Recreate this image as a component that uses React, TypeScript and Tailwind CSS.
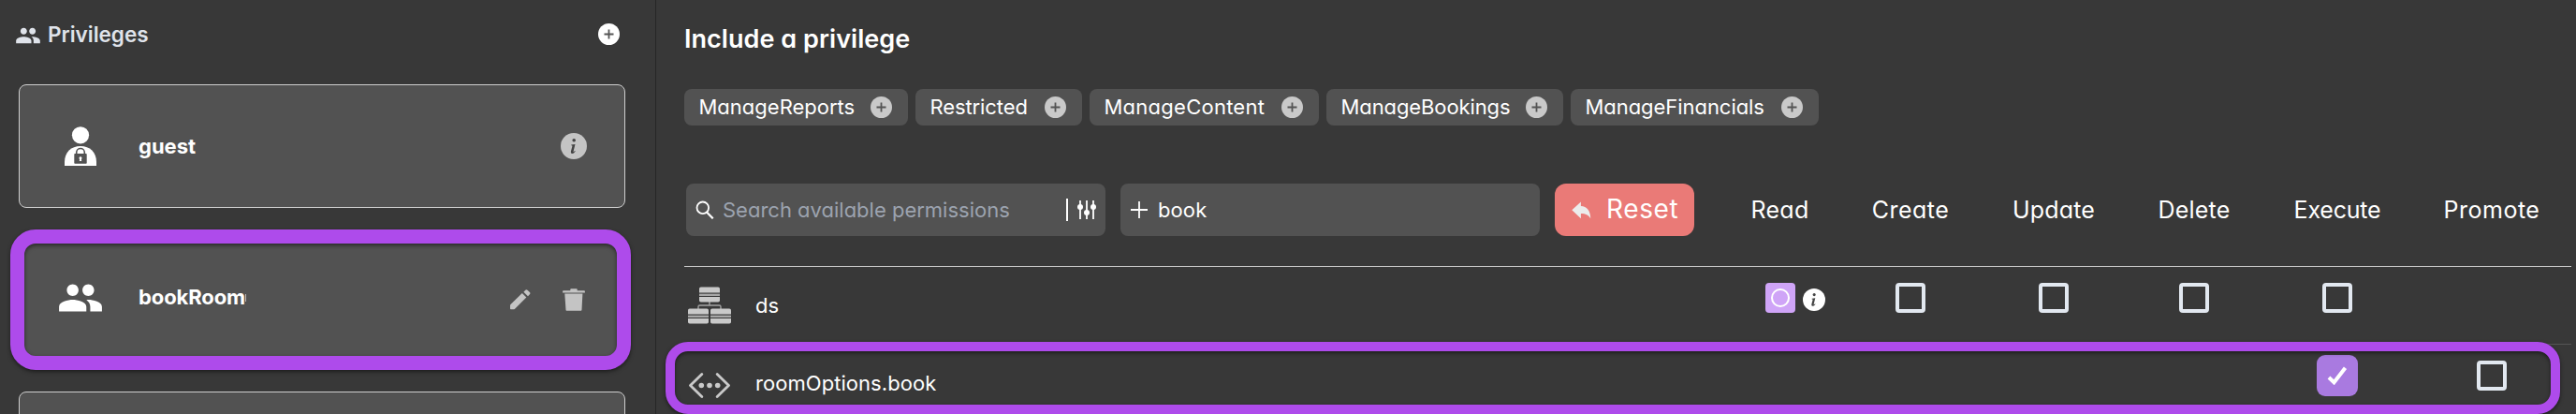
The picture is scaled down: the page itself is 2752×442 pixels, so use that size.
import type { ReactNode } from 'react';
import { MdPeople } from 'react-icons/md';

const chips = [
  { label: 'ManageReports', width: 'w-[239px]', tracking: 'tracking-[0px]' },
  { label: 'Restricted', width: 'w-[178px]', tracking: 'tracking-[-0.1px]' },
  { label: 'ManageContent', width: 'w-[245px]', tracking: 'tracking-[0.25px]' },
  { label: 'ManageBookings', width: 'w-[253px]', tracking: 'tracking-[-0.1px]' },
  { label: 'ManageFinancials', width: 'w-[265px]', tracking: 'tracking-[-0.05px]' },
];

const columns = [
  { label: 'Read', tracking: 'tracking-[0.3px]' },
  { label: 'Create', tracking: 'tracking-[0.5px]' },
  { label: 'Update', tracking: 'tracking-[0.2px]' },
  { label: 'Delete', tracking: 'tracking-[0.2px]' },
  { label: 'Execute', tracking: 'tracking-[-0.2px]' },
  { label: 'Promote', tracking: 'tracking-[0.5px]' },
];

const grid = 'grid grid-cols-[1102px_137px_142px_164px_136px_170px_160px] w-[2016px]';

function PlusCircle({ className }: { className: string }) {
  return (
    <svg viewBox="0 0 23 23" className={`size-[23px] shrink-0 ${className}`}>
      <circle cx="11.5" cy="11.5" r="11.5" fill="currentColor" />
      <path d="M11.5 6.5v10M6.5 11.5h10" stroke="#555" strokeWidth="1.8" />
    </svg>
  );
}

function InfoCircle({ className }: { className: string }) {
  return (
    <svg viewBox="0 0 28 28" className={`shrink-0 ${className}`}>
      <circle cx="14" cy="14" r="14" fill="currentColor" />
      <circle cx="14.2" cy="7.7" r="1.8" fill="#444" />
      <path
        d="M11.3 12.6c1.4-.2 2.6-.5 4.2-.6l-1.9 7.4c-.2.8.3.9 1.6-.4l.5.4c-1.2 1.7-2.3 2.5-3.4 2.5-1.3 0-1.7-1-1.3-2.6l1.3-4.9c.2-.8 0-1.2-1.1-1.1z"
        fill="#444"
      />
    </svg>
  );
}

function GuestIcon() {
  return (
    <svg viewBox="0 0 34 42" className="h-[42px] w-[34px]">
      <circle cx="17" cy="9.3" r="9.1" fill="#fff" />
      <path d="M0 42v-4C0 27.5 7 21 17 21s17 6.5 17 17v4z" fill="#fff" />
      <path d="M12.7 30v-2.2a4.3 4.3 0 0 1 8.6 0V30" fill="none" stroke="#525252" strokeWidth="1.6" />
      <rect x="10.3" y="29" width="13.4" height="10.8" rx=".8" fill="#525252" />
      <path d="M17 32.2a1.5 1.5 0 0 1 .9 2.7l.3 2.1h-2.4l.3-2.1a1.5 1.5 0 0 1 .9-2.7z" fill="#fff" />
    </svg>
  );
}

function PencilIcon() {
  return (
    <svg viewBox="0 0 22 22" className="size-[22px]" fill="#c4c4c4">
      <path d="M0 17.2c0-.5.2-.8.5-1.2L12.8 3.9l4.5 4.5L5.3 20.6c-.4.4-.7.6-1.2.6H1c-.6 0-1-.4-1-1z" />
      <path d="M14.4 2.7 16.3.8c.7-.7 1.500-.7 2.200 0l2.400 2.300c.7.7.7 1.500 0 2.200l-1.900 1.900z" />
    </svg>
  );
}

function TrashIcon() {
  return (
    <svg viewBox="0 0 24 24" className="size-6" fill="#c4c4c4">
      <path d="M8.3 2.2V1c0-.6.3-.8.8-.8h5.8c.5 0 .8.2.8.8v1.200H23c.6 0 .9.3.9.8v1.400H.1V3c0-.5.3-.8.9-.8z" />
      <path d="M2.3 5.600h19.100L20.500 22.700c0 .7-.5 1.100-1.200 1.100H4.700c-.7 0-1.200-.4-1.200-1.100z" />
    </svg>
  );
}

function SearchIcon() {
  return (
    <svg viewBox="0 0 20 20" className="size-5 shrink-0" fill="none" stroke="#fff" strokeWidth="1.8">
      <circle cx="7.8" cy="7.8" r="6.3" />
      <path d="M12 12.5 18.7 19.3" strokeWidth="2.2" />
    </svg>
  );
}

function SlidersIcon() {
  return (
    <svg viewBox="0 0 20 20" className="size-5 shrink-0" fill="#fff" stroke="#fff">
      <path d="M3 0v20M10 0v20M17 0v20" strokeWidth="1.8" />
      <g stroke="none">
        <circle cx="3" cy="7" r="3" />
        <circle cx="10" cy="13" r="3" />
        <circle cx="17" cy="7" r="3" />
      </g>
    </svg>
  );
}

function UndoIcon() {
  return (
    <svg viewBox="0 0 21 19" className="h-[19px] w-[21px] shrink-0" fill="#ececec">
      <path d="M.3 9.3 9.9.4v4.7c6.3.4 10 4.2 10.4 13.2-2.4-3.9-5.2-5.3-10.4-5.3v5.2z" />
    </svg>
  );
}

function ServerBlock({ x, y }: { x: number; y: number }) {
  return (
    <g>
      <rect x={x} y={y} width="22" height="16" rx="1.8" fill="#c9c9c9" />
      <path d={`M${x} ${y + 6.7}h22M${x} ${y + 9.8}h22`} stroke="#383838" strokeWidth="1.2" />
      <path d={`M${x} ${y + 8.25}h22`} stroke="#a8a8a8" strokeWidth="1.6" />
    </g>
  );
}

function DataSourceIcon() {
  return (
    <svg viewBox="0 0 46 40" className="h-10 w-[46px]">
      <path d="M23 16v4M11 24v-2.5q0-1.5 1.5-1.5h21q1.5 0 1.5 1.5V24" fill="none" stroke="#a3a3a3" strokeWidth="1.4" />
      <ServerBlock x={12} y={0.5} />
      <ServerBlock x={0} y={23.5} />
      <ServerBlock x={24} y={23.5} />
    </svg>
  );
}

function EndpointIcon() {
  return (
    <svg
      viewBox="0 0 46 28"
      className="mt-1.5 h-7 w-[46px]"
      fill="none"
      stroke="#c9c9c9"
      strokeWidth="2.8"
      strokeLinecap="round"
      strokeLinejoin="round"
    >
      <path d="M14.800 1.500 2.500 13.500 14.800 25.500M31.200 1.500l12.300 12L31.200 25.500" />
      <g fill="#c9c9c9" stroke="none">
        <circle cx="14.3" cy="13.5" r="2.8" />
        <circle cx="23" cy="13.5" r="2.8" />
        <circle cx="31.7" cy="13.5" r="2.8" />
      </g>
    </svg>
  );
}

function Checkbox() {
  return <div className="size-8 rounded border-4 border-[#e2e8f0]" />;
}

function Cell({ children }: { children?: ReactNode }) {
  return <div className="flex justify-center pt-[17px]">{children}</div>;
}

function NameCell({ icon, label }: { icon: ReactNode; label: string }) {
  return (
    <div className="flex h-[82px] items-center gap-[26px] pl-1">
      {icon}
      <span className="text-[22px] tracking-[0.05px]">{label}</span>
    </div>
  );
}

function Sidebar() {
  return (
    <aside className="h-full w-[701px] shrink-0 border-r border-[#262626] pl-5">
      <div className="flex h-[72px] items-center pr-[38px] text-[#dfe3ea]">
        <MdPeople className="-ml-1 mt-1 size-7" />
        <h2 className="ml-[7px] pt-0.5 text-[22.5px] font-semibold leading-7">Privileges</h2>
        <PlusCircle className="ml-auto text-white" />
      </div>

      <div className="mt-[18px] flex w-[648px] flex-col gap-8">
        <div className="flex h-[132px] items-center rounded-lg border border-[#cfcfcf] bg-[#525252] pl-12 pr-10">
          <GuestIcon />
          <span className="ml-[45px] text-[22px] font-bold leading-7">guest</span>
          <InfoCircle className="ml-auto size-7 text-[#c4c4c4]" />
        </div>

        <div className="relative flex h-[132px] items-center rounded-lg border border-[#cfcfcf] bg-[#525252] pl-10 pr-[42px]">
          <MdPeople className="-mt-1 size-[50px]" />
          <span className="-mt-1.5 ml-[37px] text-[22px] font-bold leading-7 tracking-[-0.1px]">bookRoom</span>
          <span className="-mt-1 h-2 w-px bg-[#b5b5b5]" />
          <div className="ml-auto flex items-center gap-[34px]">
            <PencilIcon />
            <TrashIcon />
          </div>
          <div className="absolute -bottom-[10px] -left-[10px] -right-[7px] -top-[10px] rounded-[27px] border-[15px] border-[#ae4beb] drop-shadow-[0_2px_2px_rgba(0,0,0,0.5)]" />
        </div>

        <div className="h-[132px] rounded-lg border border-[#cfcfcf] bg-[#525252]" />
      </div>
    </aside>
  );
}

export default function App() {
  return (
    <div className="flex h-[442px] w-[2752px] overflow-hidden bg-[#383838] font-['Inter',sans-serif] text-white [font-feature-settings:'cv11']">
      <Sidebar />

      <main className="w-[2051px] shrink-0 pl-[30px]">
        <h1 className="flex h-[85px] items-center text-[27px] font-semibold tracking-[0.05px]">Include a privilege</h1>

        <div className="mt-[10px] flex gap-2">
          {chips.map((chip) => (
            <div
              key={chip.label}
              className={`flex h-[39px] items-center justify-between rounded-lg bg-[#525252] pl-[15.5px] pr-[17.5px] ${chip.width}`}
            >
              <span className={`text-[22px] ${chip.tracking}`}>{chip.label}</span>
              <PlusCircle className="text-[#c9c9c9]" />
            </div>
          ))}
        </div>

        <div className={`mt-[62px] items-center border-b border-[#c9c9c9] pb-8 ${grid}`}>
          <div className="flex h-14 gap-4 pl-0.5">
            <div className="flex w-[448px] items-center rounded-lg bg-[#525252] px-2.5">
              <SearchIcon />
              <span className="ml-[9px] text-[22px] text-[#9ca3af]">Search available permissions</span>
              <span className="ml-auto h-6 w-0.5 bg-white" />
              <span className="ml-2.5">
                <SlidersIcon />
              </span>
            </div>
            <div className="flex w-[448px] items-center rounded-lg bg-[#525252] pl-[11px]">
              <svg viewBox="0 0 18 18" className="size-[18px]">
                <path d="M9 0v18M0 9h18" stroke="#fff" strokeWidth="1.8" />
              </svg>
              <span className="ml-[11px] text-[22px] tracking-[0.1px]">book</span>
            </div>
            <div className="flex w-[149px] items-center rounded-xl bg-[#ea7a77] pl-[18px]">
              <UndoIcon />
              <span className="-mt-0.5 ml-4 text-[28px] leading-8 tracking-[0.6px]">Reset</span>
            </div>
          </div>
          {columns.map((column) => (
            <div key={column.label} className={`-mt-px text-center text-[25px] leading-8 ${column.tracking}`}>
              {column.label}
            </div>
          ))}
        </div>

        <div className={`h-[83px] border-b border-[#555] ${grid}`}>
          <NameCell icon={<DataSourceIcon />} label="ds" />
          <div className="flex gap-2 pl-[53px] pt-[17px]">
            <div className="flex size-8 items-center justify-center rounded bg-[#cfa4f7]">
              <div className="size-5 rounded-full border-[2.5px] border-white" />
            </div>
            <InfoCircle className="mt-1.5 size-6 text-white" />
          </div>
          <Cell><Checkbox /></Cell>
          <Cell><Checkbox /></Cell>
          <Cell><Checkbox /></Cell>
          <Cell><Checkbox /></Cell>
          <Cell />
        </div>

        <div className={`relative h-[83px] ${grid}`}>
          <NameCell icon={<EndpointIcon />} label="roomOptions.book" />
          <Cell />
          <Cell />
          <Cell />
          <Cell />
          <div className="flex justify-center pt-[11px]">
            <div className="flex size-11 items-center justify-center rounded-[9px] bg-[#a97ae0]">
              <svg viewBox="0 0 22 20" className="h-5 w-[22px]">
                <path d="M2 12 7.5 17.3 19.5 1.8" fill="none" stroke="#fff" strokeWidth="4" />
              </svg>
            </div>
          </div>
          <Cell><Checkbox /></Cell>
          <div className="absolute -left-5 -top-[3px] h-[77px] w-[2024px] rounded-3xl border-[10px] border-[#ae4beb] drop-shadow-[0_2px_2px_rgba(0,0,0,0.5)]" />
        </div>
      </main>
    </div>
  );
}
